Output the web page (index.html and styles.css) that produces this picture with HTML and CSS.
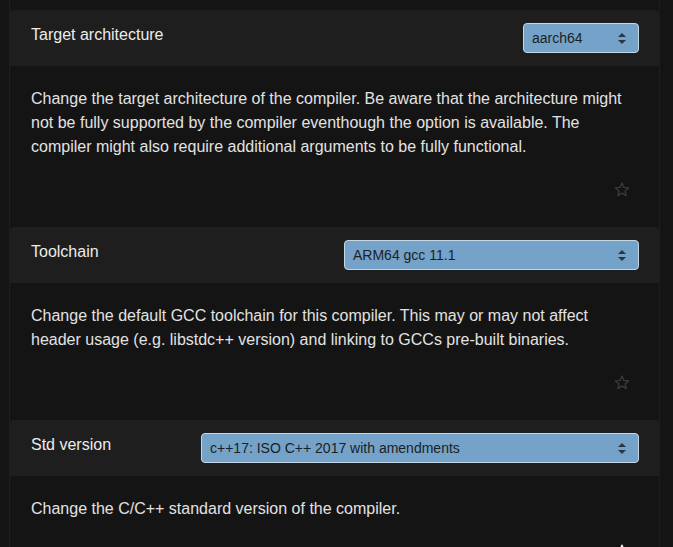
FILE: index.html
```html
<!DOCTYPE html>
<html>
<head>
<meta charset="utf-8">
<link rel="stylesheet" href="styles.css">
</head>
<body>
<div class="list">
  <div class="card">
    <div class="card-header">
      <div class="title">Target architecture</div>
      <div class="select sel-arch"><span>aarch64</span>
        <svg class="arrows" width="8" height="11" viewBox="0 0 8 11"><path d="M4 0 L8 4 L0 4 Z M0 7 L8 7 L4 11 Z" fill="#2b3640"/></svg>
      </div>
    </div>
    <div class="card-body">
      <p class="desc">Change the target architecture of the compiler. Be aware that the architecture might not be fully supported by the compiler eventhough the option is available. The compiler might also require additional arguments to be fully functional.</p>
      <div class="fav">
        <svg class="star" width="16" height="15" viewBox="0 0 16 15"><path d="M8 1 L9.9 5.4 L14.7 5.8 L11 8.9 L12.2 13.6 L8 11.1 L3.8 13.6 L5 8.9 L1.3 5.8 L6.1 5.4 Z" fill="none" stroke="#363c44" stroke-width="1.3" stroke-linejoin="round"/></svg>
      </div>
    </div>
  </div>
  <div class="card">
    <div class="card-header">
      <div class="title">Toolchain</div>
      <div class="select sel-tool"><span>ARM64 gcc 11.1</span>
        <svg class="arrows" width="8" height="11" viewBox="0 0 8 11"><path d="M4 0 L8 4 L0 4 Z M0 7 L8 7 L4 11 Z" fill="#2b3640"/></svg>
      </div>
    </div>
    <div class="card-body">
      <p class="desc">Change the default GCC toolchain for this compiler. This may or may not affect header usage (e.g. libstdc++ version) and linking to GCCs pre-built binaries.</p>
      <div class="fav">
        <svg class="star" width="16" height="15" viewBox="0 0 16 15"><path d="M8 1 L9.9 5.4 L14.7 5.8 L11 8.9 L12.2 13.6 L8 11.1 L3.8 13.6 L5 8.9 L1.3 5.8 L6.1 5.4 Z" fill="none" stroke="#363c44" stroke-width="1.3" stroke-linejoin="round"/></svg>
      </div>
    </div>
  </div>
  <div class="card">
    <div class="card-header">
      <div class="title">Std version</div>
      <div class="select sel-std"><span>c++17: ISO C++ 2017 with amendments</span>
        <svg class="arrows" width="8" height="11" viewBox="0 0 8 11"><path d="M4 0 L8 4 L0 4 Z M0 7 L8 7 L4 11 Z" fill="#2b3640"/></svg>
      </div>
    </div>
    <div class="card-body">
      <p class="desc">Change the C/C++ standard version of the compiler.</p>
      <div class="fav">
        <svg class="star" width="16" height="15" viewBox="0 0 16 15"><path d="M8 1 L9.9 5.4 L14.7 5.8 L11 8.9 L12.2 13.6 L8 11.1 L3.8 13.6 L5 8.9 L1.3 5.8 L6.1 5.4 Z" fill="#e8e8e8" stroke="#e8e8e8" stroke-width="1.3" stroke-linejoin="round"/></svg>
      </div>
    </div>
  </div>
</div>
</body>
</html>
```
FILE: styles.css
```css
html, body {
  margin: 0;
  padding: 0;
  background: #141414;
  height: 100%;
  overflow: hidden;
}
body {
  font-family: "Liberation Sans", Arial, sans-serif;
  color: #e4e4e4;
}
.list {
  margin-left: 9px;
  width: 651px;
  min-height: 100%;
  border-left: 1px solid #1e1e1e;
  border-right: 1px solid #1e1e1e;
  padding-top: 10px;
  box-sizing: border-box;
  background: #141414;
}
.card {
  background: #141414;
}
.card-header {
  background: #1e1e1e;
  border-radius: 4px 4px 0 0;
  height: 56px;
  box-sizing: border-box;
  padding: 13px 20px 0 21px;
  display: flex;
  justify-content: space-between;
  align-items: flex-start;
}
.title {
  font-size: 16px;
  line-height: 24px;
  color: #ececec;
}
.select {
  height: 30px;
  box-sizing: border-box;
  background: #74a2c8;
  border: 1px solid #c5d6e4;
  border-radius: 4px;
  display: flex;
  align-items: center;
  justify-content: space-between;
  padding: 0 12px 0 8px;
  font-size: 14px;
  color: #1b1f24;
}
.sel-arch { width: 116px; }
.sel-tool { width: 295px; }
.sel-std { width: 438px; }
.arrows { display: block; }
.card-body {
  padding: 21px 20px 30px 21px;
}
.desc {
  margin: 0;
  font-size: 16px;
  line-height: 24px;
  color: #e2e2e2;
}
.fav {
  margin-top: 24px;
  height: 14px;
  display: flex;
  justify-content: flex-end;
  padding-right: 9px;
}
.star {
  display: block;
  margin-top: -1px;
}
```
